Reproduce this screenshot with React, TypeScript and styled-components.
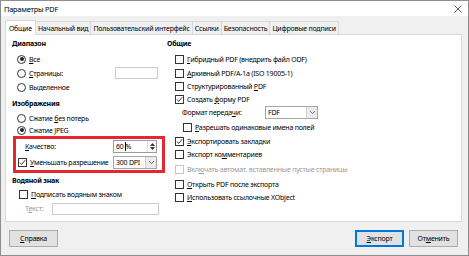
import styled, { createGlobalStyle } from 'styled-components';

const GlobalStyle = createGlobalStyle`
  html, body {
    margin: 0;
    padding: 0;
  }

  body {
    font-family: 'Noto Sans', 'DejaVu Sans', sans-serif;
    font-size: 7px;
    letter-spacing: -0.22px;
    color: #000;
    background: #f0f0f0;
  }
`;

const Check = ({ on, disabled }: { on?: boolean; disabled?: boolean }) => (
  <CheckBox $disabled={disabled}>
    {on && (
      <svg width="7" height="7" viewBox="0 0 7 7">
        <path d="M0.8 3.6 L2.7 5.4 L6.2 1.2" fill="none" stroke="#222" strokeWidth="0.9" />
      </svg>
    )}
  </CheckBox>
);

const Chevron = () => (
  <svg width="7" height="5" viewBox="0 0 7 5">
    <path d="M1 1 L3.5 3.6 L6 1" fill="none" stroke="#555" strokeWidth="0.8" />
  </svg>
);

export default function App() {
  return (
    <>
      <GlobalStyle />
      <Window>
        <TitleBar>
          <Title>Параметры PDF</Title>
          <svg width="8" height="8" viewBox="0 0 8 8">
            <path d="M0.5 0.5 L7.5 7.5 M7.5 0.5 L0.5 7.5" stroke="#333" strokeWidth="0.8" />
          </svg>
        </TitleBar>

        <Content>
          <Tabs>
            <Tab $active>Общие</Tab>
            <Tab>Начальный вид</Tab>
            <Tab>Пользовательский интерфейс</Tab>
            <Tab>Ссылки</Tab>
            <Tab>Безопасность</Tab>
            <Tab>Цифровые подписи</Tab>
          </Tabs>

          <Panel>
            <Column>
              <Line $h={17}><Heading>Диапазон</Heading></Line>
              <Line $h={14} $indent={5}>
                <Radio $on /><Label><u>В</u>се</Label>
              </Line>
              <Line $h={14} $indent={5}>
                <Radio /><Label $grow><u>С</u>траницы:</Label>
                <Field $w={43} $mr={9} />
              </Line>
              <Line $h={15} $indent={5}>
                <Radio /><Label>Выделенное</Label>
              </Line>
              <Line $h={17}><Heading>Изображения</Heading></Line>
              <Line $h={12} $indent={5}>
                <Radio /><Label>Сжатие <u>б</u>ез потерь</Label>
              </Line>
              <Line $h={12} $indent={5}>
                <Radio $on /><Label>Сжатие <u>J</u>PEG</Label>
              </Line>

              <Highlight>
                <Line $h={15} $indent={9}>
                  <Label $grow $gap={0}><u>К</u>ачество:</Label>
                  <Spin>
                    <SpinText>60<Caret />%</SpinText>
                    <SpinButtons>
                      <svg width="5" height="3" viewBox="0 0 5 3"><path d="M0 3 L2.5 0 L5 3 Z" fill="#333" /></svg>
                      <svg width="5" height="3" viewBox="0 0 5 3"><path d="M0 0 L2.5 3 L5 0 Z" fill="#333" /></svg>
                    </SpinButtons>
                  </Spin>
                </Line>
                <Line $h={16} $indent={2}>
                  <Check on /><Label $grow><u>У</u>меньшать разрешение</Label>
                  <Combo $w={44} $mr={5}>
                    <ComboText>300 DPI</ComboText>
                    <ComboButton><Chevron /></ComboButton>
                  </Combo>
                </Line>
              </Highlight>

              <Line $h={15}><Heading>Водяной знак</Heading></Line>
              <Line $h={13} $indent={7}>
                <Check /><Label><u>П</u>одписать водяным знаком</Label>
              </Line>
              <Line $h={15} $indent={13}>
                <Label $gap={0} $muted $grow>Т<u>е</u>кст:</Label>
                <Field $w={107} $mr={8} />
              </Line>
            </Column>

            <Column>
              <Line $h={17}><Heading>Общие</Heading></Line>
              <Line $h={14} $indent={8}>
                <Check /><Label><u>Г</u>ибридный PDF (внедрить файл ODF)</Label>
              </Line>
              <Line $h={14} $indent={8}>
                <Check /><Label><u>А</u>рхивный PDF/A-1a (ISO 19005-1)</Label>
              </Line>
              <Line $h={13} $indent={8}>
                <Check /><Label>Структурированный <u>P</u>DF</Label>
              </Line>
              <Line $h={12} $indent={8}>
                <Check on /><Label>Создать <u>ф</u>орму PDF</Label>
              </Line>
              <Line $h={15} $indent={15}>
                <Label $gap={0} $w={83}>Формат переда<u>ч</u>и:</Label>
                <Combo $w={53}>
                  <ComboText>FDF</ComboText>
                  <ComboButton><Chevron /></ComboButton>
                </Combo>
              </Line>
              <Line $h={15} $indent={16}>
                <Check /><Label><u>Р</u>азрешать одинаковые имена полей</Label>
              </Line>
              <Line $h={13} $indent={8}>
                <Check on /><Label><u>Э</u>кспортировать закладки</Label>
              </Line>
              <Line $h={13} $indent={8}>
                <Check /><Label>Экспорт ко<u>м</u>ментариев</Label>
              </Line>
              <Line $h={16} $indent={8}>
                <Check disabled /><Label $muted>Вкл<u>ю</u>чать автомат. вставленные пустые страницы</Label>
              </Line>
              <Line $h={14} $indent={8}>
                <Check /><Label><u>О</u>ткрыть PDF после экспорта</Label>
              </Line>
              <Line $h={12} $indent={8}>
                <Check /><Label><u>И</u>спользовать ссылочные XObject</Label>
              </Line>
            </Column>
          </Panel>

          <Footer>
            <Button><u>С</u>правка</Button>
            <Spacer />
            <Button $primary><u>Э</u>кспорт</Button>
            <Button>От<u>м</u>енить</Button>
          </Footer>
        </Content>
      </Window>
    </>
  );
}

const Window = styled.div`
  width: 469px;
  height: 256px;
  box-sizing: border-box;
  border: 1px solid #8e8e8e;
  background: #f0f0f0;

  display: flex;
  flex-direction: column;
`;

const TitleBar = styled.div`
  height: 15px;
  background: #fff;
  padding: 0 6px 0 3px;

  display: flex;
  align-items: center;
  justify-content: space-between;
`;

const Title = styled.div`
  font-size: 7.4px;
`;

const Content = styled.div`
  flex: 1;
  padding: 3px 6px 0 4px;

  display: flex;
  flex-direction: column;
`;

const Tabs = styled.div`
  height: 15px;
  display: flex;
  align-items: flex-end;
`;

const Tab = styled.div<{ $active?: boolean }>`
  position: relative;
  z-index: ${(p) => (p.$active ? 1 : 0)};

  height: ${(p) => (p.$active ? 14 : 12)}px;
  margin-bottom: ${(p) => (p.$active ? -1 : 0)}px;
  margin-left: -1px;
  padding: 0 2px;
  border: 1px solid #d9d9d9;
  border-bottom: none;
  background: ${(p) => (p.$active ? '#fff' : '#f0f0f0')};

  display: flex;
  align-items: center;
  &:first-child {
    margin-left: 0;
    padding: 0 3px;
  }
`;

const Panel = styled.div`
  height: 186px;
  background: #fff;
  border: 1px solid #d9d9d9;
  padding-left: 6px;

  display: grid;
  grid-template-columns: 155px 1fr;
`;

const Column = styled.div`
  display: flex;
  flex-direction: column;
`;

const Line = styled.div<{ $h: number; $indent?: number }>`
  height: ${(p) => p.$h}px;
  padding-left: ${(p) => p.$indent ?? 0}px;
  flex-shrink: 0;

  display: flex;
  align-items: center;
  white-space: nowrap;
`;

const Heading = styled.div`
  font-weight: 700;
`;

const Label = styled.span<{ $grow?: boolean; $gap?: number; $muted?: boolean; $w?: number }>`
  margin-left: ${(p) => p.$gap ?? 3}px;
  flex: ${(p) => (p.$grow ? 1 : 'none')};
  width: ${(p) => (p.$w ? `${p.$w}px` : 'auto')};
  color: ${(p) => (p.$muted ? '#9a9a9a' : '#000')};

  u {
    text-underline-offset: 1px;
  }
`;

const Radio = styled.span<{ $on?: boolean }>`
  width: 9px;
  height: 9px;
  box-sizing: border-box;
  border: 1px solid #333;
  border-radius: 50%;
  flex-shrink: 0;

  display: flex;
  align-items: center;
  justify-content: center;

  &::after {
    content: '';
    width: 4px;
    height: 4px;
    border-radius: 50%;
    background: #222;
    display: ${(p) => (p.$on ? 'block' : 'none')};
  }
`;

const CheckBox = styled.span<{ $disabled?: boolean }>`
  width: 9px;
  height: 9px;
  box-sizing: border-box;
  border: 1px solid ${(p) => (p.$disabled ? '#c4c4c4' : '#333')};
  background: #fff;
  flex-shrink: 0;

  display: flex;
  align-items: center;
  justify-content: center;
`;

const Field = styled.div<{ $w: number; $mr?: number }>`
  width: ${(p) => p.$w}px;
  height: 12px;
  margin-right: ${(p) => p.$mr ?? 0}px;
  box-sizing: border-box;
  border: 1px solid #cccccc;
  background: #fff;
`;

const Highlight = styled.div`
  width: 152px;
  margin-left: 1px;
  box-sizing: border-box;
  border: 3px solid #e8262e;
  display: flex;
  flex-direction: column;
`;

const Spin = styled.div`
  width: 44px;
  height: 13px;
  margin-right: 5px;
  box-sizing: border-box;
  border: 1px solid #9a9a9a;
  background: #fff;

  display: flex;
  align-items: center;
`;

const SpinText = styled.span`
  flex: 1;
  padding-left: 2px;
  display: flex;
  align-items: center;
`;

const Caret = styled.span`
  width: 1px;
  height: 9px;
  margin: 0 0 0 1px;
  background: #000;
`;

const SpinButtons = styled.div`
  width: 8px;
  height: 100%;
  border-left: 1px solid #e0e0e0;

  display: flex;
  flex-direction: column;
  align-items: center;
  justify-content: center;
  gap: 1px;
`;

const Combo = styled.div<{ $w: number; $mr?: number }>`
  width: ${(p) => p.$w}px;
  height: 13px;
  margin-right: ${(p) => p.$mr ?? 0}px;
  box-sizing: border-box;
  border: 1px solid #a6a6a6;
  background: #fff;

  display: flex;
  align-items: center;
`;

const ComboText = styled.span`
  flex: 1;
  padding-left: 2px;
`;

const ComboButton = styled.span`
  width: 10px;
  height: 100%;
  background: #ececec;
  border-left: 1px solid #d0d0d0;

  display: flex;
  align-items: center;
  justify-content: center;
`;

const Footer = styled.div`
  flex: 1;
  padding: 0 4px 0 4px;

  display: flex;
  align-items: center;
  gap: 5px;
`;

const Spacer = styled.div`
  flex: 1;
`;

const Button = styled.div<{ $primary?: boolean }>`
  width: 49px;
  height: 17px;
  box-sizing: border-box;
  border: 1px solid ${(p) => (p.$primary ? '#0078d7' : '#adadad')};
  box-shadow: ${(p) => (p.$primary ? 'inset 0 0 0 1px #0078d7' : 'none')};
  background: #e1e1e1;

  display: flex;
  align-items: center;
  justify-content: center;
`;
